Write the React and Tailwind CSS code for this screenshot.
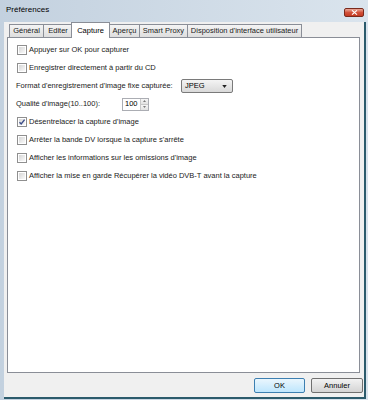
import React from 'react';

const font = { fontFamily: '"Liberation Sans", Arial, sans-serif' };

const tabs = [
  { label: 'Général', w: 'w-[35px]', ml: '' },
  { label: 'Editer', w: 'w-[30px]', ml: '-ml-px' },
  { label: 'Capture', w: 'w-[39px]', ml: '-ml-[2px]', active: true },
  { label: 'Aperçu', w: 'w-[31px]', ml: '-ml-px' },
  { label: 'Smart Proxy', w: 'w-[49px]', ml: '-ml-px' },
  { label: "Disposition d'interface utilisateur", w: 'w-[115px]', ml: '-ml-px' },
];

const Checkbox = ({ checked }) => (
  <div className="w-[10px] h-[10px] shrink-0 border border-[#8f8f8f] bg-white p-px">
    <div className="w-full h-full bg-gradient-to-br from-[#d6d6d6] to-[#fafafa] relative">
      {checked && (
        <svg viewBox="0 0 8 8" className="absolute -left-px -top-px w-[8px] h-[8px]">
          <path d="M1.5 4.2 L3.2 6 L6.6 1.6" fill="none" stroke="#3d4f8a" strokeWidth="1.4" />
        </svg>
      )}
    </div>
  </div>
);

const CheckRow = ({ label, checked }) => (
  <div className="h-[18px] flex items-center gap-[2px]">
    <Checkbox checked={checked} />
    <span className="text-[7.5px] text-[#1a1a1a] leading-none whitespace-nowrap">{label}</span>
  </div>
);

export default function App() {
  return (
    <div style={font} className="w-[368px] h-[400px] flex flex-col bg-gradient-to-r from-[#c3d1df] to-[#dae4ed] overflow-hidden">
      {/* title bar */}
      <div className="h-[22px] shrink-0 flex items-center justify-between pl-[6px] pr-[4px]">
        <span className="text-[8px] text-black leading-none -mt-[2px]">Préférences</span>
        <div className="w-[20px] h-[9px] mt-[2px] rounded-[2px] border border-[#7a2a1c] bg-gradient-to-b from-[#e9a99a] via-[#d2513a] to-[#c33a22] flex items-center justify-center">
          <svg viewBox="0 0 8 6" className="w-[7px] h-[5px]">
            <path d="M1 0.5 L7 5.5 M7 0.5 L1 5.5" stroke="white" strokeWidth="1.4" />
          </svg>
        </div>
      </div>

      {/* body */}
      <div className="flex-1 flex flex-col ml-[4px] mr-[2px] mb-px bg-[#f0f0f0] border-r-[2px] border-b-[2px] border-[#2c5b6c]">
        {/* tabs */}
        <div className="h-[15px] flex items-end pl-[5px] shrink-0">
          {tabs.map((t) =>
            t.active ? (
              <div
                key={t.label}
                className={`${t.w} ${t.ml} h-[16px] -mb-px relative z-10 bg-white border border-b-0 border-[#8a8e97] flex items-center justify-center text-[7.5px] text-black leading-none whitespace-nowrap`}
              >
                {t.label}
              </div>
            ) : (
              <div
                key={t.label}
                className={`${t.w} ${t.ml} h-[13px] bg-gradient-to-b from-[#f4f4f4] to-[#dedede] border border-b-0 border-[#8a8e97] flex items-center justify-center text-[7.5px] text-[#1a1a1a] leading-none whitespace-nowrap`}
              >
                {t.label}
              </div>
            )
          )}
        </div>

        {/* panel */}
        <div className="ml-[3px] w-[353px] h-[336px] shrink-0 bg-white border border-[#8a8e97] pt-[3px] pl-[9px]">
          <CheckRow label="Appuyer sur OK pour capturer" />
          <CheckRow label="Enregistrer directement à partir du CD" />
          <div className="h-[18px] flex items-center -ml-px">
            <span className="w-[165px] text-[7.5px] text-[#1a1a1a] leading-none whitespace-nowrap">Format d'enregistrement d'image fixe capturée:</span>
            <div className="w-[52px] h-[14px] rounded-[2px] border border-[#7a7a7a] bg-gradient-to-b from-[#f4f4f4] to-[#d9d9d9] flex items-center justify-between pl-[3px] pr-[5px]">
              <span className="text-[7.5px] leading-none">JPEG</span>
              <svg viewBox="0 0 6 4" className="w-[5px] h-[3px]">
                <path d="M0 0 L6 0 L3 4 Z" fill="#222" />
              </svg>
            </div>
          </div>
          <div className="h-[18px] flex items-center -ml-px">
            <span className="w-[106px] text-[7.5px] text-[#1a1a1a] leading-none whitespace-nowrap">Qualité d'image(10..100):</span>
            <div className="w-[27px] h-[13px] border border-[#abadb3] bg-white flex items-stretch">
              <span className="flex-1 text-[7.5px] leading-none flex items-center pl-[2px]">100</span>
              <div className="w-[8px] flex flex-col border-l border-[#c8c8c8]">
                <div className="flex-1 bg-gradient-to-b from-[#f6f6f6] to-[#e2e2e2] border-b border-[#c8c8c8] flex items-center justify-center">
                  <svg viewBox="0 0 4 2" className="w-[3px] h-[2px]"><path d="M0 2 L4 2 L2 0 Z" fill="#555" /></svg>
                </div>
                <div className="flex-1 bg-gradient-to-b from-[#f6f6f6] to-[#e2e2e2] flex items-center justify-center">
                  <svg viewBox="0 0 4 2" className="w-[3px] h-[2px]"><path d="M0 0 L4 0 L2 2 Z" fill="#555" /></svg>
                </div>
              </div>
            </div>
          </div>
          <CheckRow label="Désentrelacer la capture d'image" checked />
          <CheckRow label="Arrêter la bande DV lorsque la capture s'arrête" />
          <CheckRow label="Afficher les informations sur les omissions d'image" />
          <CheckRow label="Afficher la mise en garde Récupérer la vidéo DVB-T avant la capture" />
        </div>

        {/* buttons */}
        <div className="flex justify-end gap-[6px] mt-[5px] pr-px">
          <button className="w-[51px] h-[15px] rounded-[2px] border border-[#3c7fb1] bg-gradient-to-b from-[#eaf6fd] to-[#bee6fd] text-[7.5px] leading-none text-black">
            OK
          </button>
          <button className="w-[52px] h-[15px] rounded-[2px] border border-[#707070] bg-gradient-to-b from-[#f2f2f2] to-[#d4d4d4] text-[7.5px] leading-none text-black">
            Annuler
          </button>
        </div>
      </div>
    </div>
  );
}
